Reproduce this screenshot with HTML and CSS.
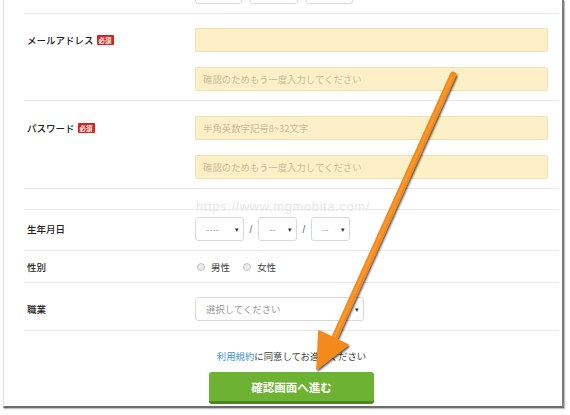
FILE: index.html
```html
<!DOCTYPE html>
<html lang="ja">
<head>
<meta charset="utf-8">
<link rel="stylesheet" href="styles.css">
</head>
<body>
<div class="frame">
  <div class="prev-row">
    <div class="sel sel-a"></div>
    <div class="sel sel-b"></div>
    <div class="sel sel-a"></div>
  </div>

  <div class="row row-pair row-email">
    <div class="label">メールアドレス<span class="req">必須</span></div>
    <div class="fields">
      <input class="inp" type="text">
      <input class="inp" type="text" placeholder="確認のためもう一度入力してください">
    </div>
  </div>

  <div class="row row-pair">
    <div class="label">パスワード<span class="req">必須</span></div>
    <div class="fields">
      <input class="inp" type="text" placeholder="半角英数字記号8~32文字">
      <input class="inp" type="text" placeholder="確認のためもう一度入力してください">
    </div>
  </div>

  <div class="spacer"></div>

  <div class="row row-birth">
    <div class="label">生年月日</div>
    <div class="fields inline">
      <div class="sel sel-y"><span class="ph">----</span><span class="caret">▾</span></div>
      <span class="slash">/</span>
      <div class="sel sel-m"><span class="ph">--</span><span class="caret">▾</span></div>
      <span class="slash">/</span>
      <div class="sel sel-m"><span class="ph">--</span><span class="caret">▾</span></div>
    </div>
  </div>

  <div class="row row-gender">
    <div class="label">性別</div>
    <div class="fields inline radios">
      <span class="radio"></span><span class="rtxt">男性</span>
      <span class="radio"></span><span class="rtxt">女性</span>
    </div>
  </div>

  <div class="row row-job">
    <div class="label">職業</div>
    <div class="fields inline">
      <div class="sel sel-job"><span class="ph">選択してください</span><span class="caret">▾</span></div>
    </div>
  </div>

  <div class="submit">
    <p class="terms"><span class="link">利用規約</span>に同意してお進みください</p>
    <div class="btn">確認画面へ進む</div>
  </div>
</div>

<div class="watermark">https://www.mgmobita.com/</div>

<svg class="arrow" width="570" height="415" viewBox="0 0 570 415">
  <defs>
    <filter id="sh" x="-20%" y="-20%" width="140%" height="140%">
      <feDropShadow dx="1" dy="1.5" stdDeviation="1.3" flood-color="#000" flood-opacity="0.75"/>
    </filter>
  </defs>
  <g filter="url(#sh)">
    <line x1="453" y1="75" x2="334" y2="339" stroke="#f58a1f" stroke-width="6.5" stroke-linecap="round"/>
    <polygon points="317,369 319,331 348,345" fill="#f58a1f" stroke="#f58a1f" stroke-width="1.5" stroke-linejoin="round"/>
  </g>
  <line x1="452" y1="77" x2="335" y2="336" stroke="#fca23c" stroke-width="2" stroke-linecap="round" opacity="0.7"/>
</svg>
</body>
</html>
```

FILE: styles.css
```css
* { box-sizing: border-box; }
html, body { margin: 0; padding: 0; background: #fff; }
body {
  position: relative;
  width: 570px;
  height: 415px;
  overflow: hidden;
  font-family: "Noto Sans CJK JP", "Noto Sans", sans-serif;
  color: #333;
}
.frame {
  margin-left: 3px;
  width: 561px;
  height: 408px;
  border-left: 1px solid #e2e2e2;
  border-right: 2px solid #7c7c7c;
  border-bottom: 2px solid #6c6c6c;
  padding: 0 3px 0 20px;
  box-shadow: 1px 1px 1px rgba(0,0,0,0.25);
}
.prev-row {
  height: 14px;
  border-bottom: 1px solid #e8e8e8;
  display: flex;
  align-items: flex-start;
  gap: 8px;
  padding-left: 171px;
}
.prev-row .sel { margin-top: -20px; height: 24px; }
.sel-a { width: 47px; }
.sel-b { width: 48px; }

.row {
  display: grid;
  grid-template-columns: 171px 1fr;
  border-bottom: 1px solid #e8e8e8;
}
.row-pair { padding: 15px 0 9px; }
.row-email { padding-top: 14px; }
.row-birth { padding: 7px 0 9px; }
.row-gender { height: 32px; align-items: center; }
.row-job { padding: 14px 0 9px; }
.spacer { height: 21px; border-bottom: 1px solid #ebebeb; }

.label {
  padding-left: 3px;
  font-size: 9.5px;
  font-weight: 500;
  line-height: 24px;
  height: 24px;
  color: #222;
  display: flex;
  align-items: center;
  white-space: nowrap;
}
.row-gender .label { line-height: 14px; height: 14px; }
.req {
  display: inline-block;
  margin-left: 3px;
  background: #d8231b;
  color: #fff;
  font-size: 6.5px;
  line-height: 10px;
  height: 10px;
  padding: 0 2px;
  border-radius: 1px;
  font-weight: bold;
}
.fields { display: flex; flex-direction: column; gap: 15px; padding-right: 11px; }
.fields.inline { flex-direction: row; align-items: center; gap: 0; }

.inp {
  display: block;
  width: 100%;
  height: 24px;
  margin: 0;
  border: 1px solid #f2e2af;
  border-radius: 2px;
  background: #fdf0c6;
  padding: 0 7px;
  font-family: inherit;
  font-size: 9.4px;
  color: #333;
  outline: none;
}
.inp::placeholder { color: #c8bb98; }

.sel {
  height: 24px;
  border: 1px solid #d9d9d9;
  border-radius: 3px;
  background: #fff;
  display: flex;
  align-items: center;
  justify-content: space-between;
  padding: 0 4px 0 10px;
  font-size: 9.4px;
  color: #999;
}
.sel-y { width: 49px; }
.sel-m { width: 39px; }
.sel-job { width: 169px; }
.ph { color: #999; }
.caret { font-size: 7px; color: #333; }
.slash { width: 14px; text-align: center; font-size: 10px; color: #666; font-family: "Liberation Sans", sans-serif; }

.radios { font-size: 9.5px; color: #444; }
.radio {
  width: 8px;
  height: 8px;
  border-radius: 50%;
  border: 1px solid #c4c4c4;
  background: #ececec;
  margin-left: 2px;
  margin-right: 6px;
}
.rtxt { margin-right: 11px; }

.submit {
  display: flex;
  flex-direction: column;
  align-items: center;
  padding-top: 18px;
}
.terms {
  margin: 0;
  font-size: 9.4px;
  line-height: 14px;
  color: #444;
}
.link { color: #3b95d4; }
.btn {
  margin-top: 9px;
  width: 165px;
  height: 32px;
  background: #6db232;
  border-radius: 3px;
  border-bottom: 3px solid #4c8520;
  color: #fff;
  font-weight: bold;
  font-size: 11.5px;
  display: flex;
  align-items: center;
  justify-content: center;
}
.watermark {
  position: absolute;
  left: 196px;
  top: 199px;
  font-family: "Liberation Sans", sans-serif;
  font-size: 13px;
  letter-spacing: 0.6px;
  color: #e6e6e6;
}
.arrow { position: absolute; left: 0; top: 0; pointer-events: none; }
```
